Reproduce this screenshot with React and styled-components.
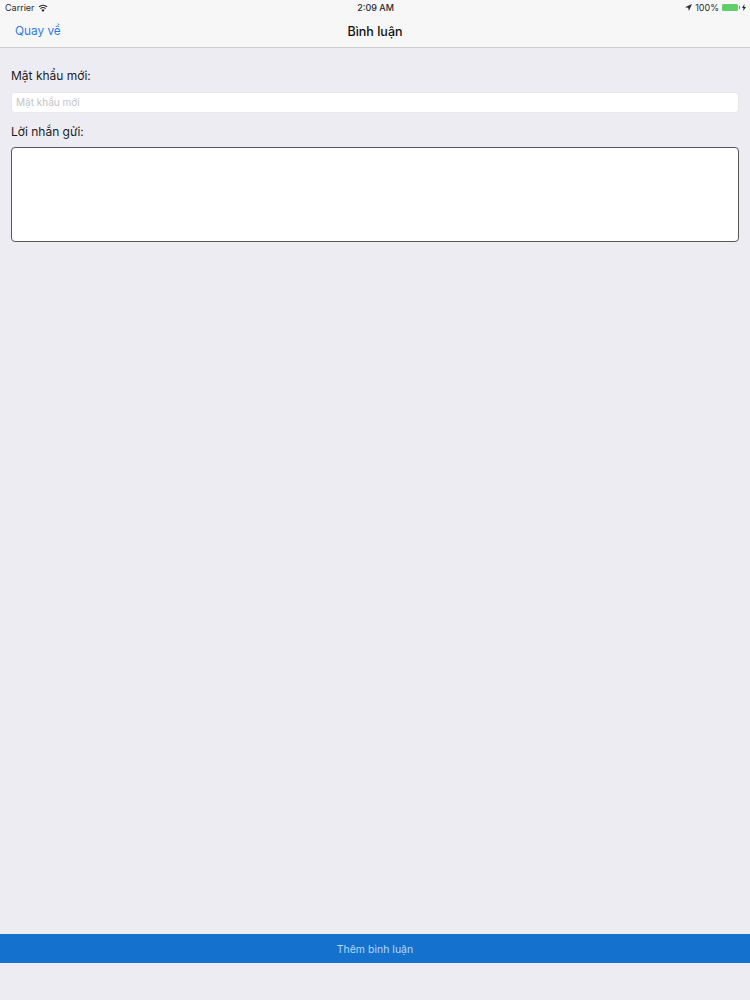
import React from 'react';
import styled, { createGlobalStyle } from 'styled-components';

const GlobalStyle = createGlobalStyle`
  html, body {
    margin: 0;
    padding: 0;
    background: #edecf2;
    font-family: Inter, "Liberation Sans", sans-serif;
  }
  * { box-sizing: border-box; }
`;

const Page = styled.div`
  width: 750px;
  height: 1000px;
  display: flex;
  flex-direction: column;
  background: #edecf2;
  overflow: hidden;
`;

const Header = styled.header`
  height: 48px;
  flex: none;
  background: #f7f7f8;
  border-bottom: 1px solid #cfcfd3;
  display: flex;
  flex-direction: column;
`;

const StatusBar = styled.div`
  height: 15px;
  padding: 0 4px 0 5px;
  display: grid;
  grid-template-columns: 1fr auto 1fr;
  align-items: center;
  font-size: 9px;
  color: #2b2b2d;
`;

const StatusLeft = styled.div`
  display: flex;
  align-items: center;
  gap: 3px;
`;

const StatusRight = styled.div`
  display: flex;
  align-items: center;
  justify-content: flex-end;
  gap: 3px;
`;

const Clock = styled.div`
  font-weight: 500;
`;

const Battery = styled.span`
  width: 16px;
  height: 7px;
  border-radius: 1.5px;
  background: #5fd068;
  position: relative;
  margin-right: 1px;

  &::after {
    content: '';
    position: absolute;
    right: -2px;
    top: 2px;
    width: 1.5px;
    height: 3px;
    background: #8a8a8a;
  }
`;

const NavBar = styled.nav`
  flex: 1;
  display: grid;
  grid-template-columns: 1fr auto 1fr;
  align-items: center;
  padding: 0 15px;
`;

const BackLink = styled.a`
  font-size: 11.8px;
  color: #2f7ae5;
`;

const Title = styled.h1`
  margin: 0;
  font-size: 12.5px;
  font-weight: 500;
  color: #111;
`;

const Form = styled.main`
  flex: 1;
  padding: 19px 11px 0;
  display: flex;
  flex-direction: column;
`;

const Label = styled.label`
  font-size: 12px;
  line-height: 17px;
  color: #1c1c1e;
`;

const TextInput = styled.input`
  height: 21px;
  margin: 8px 0 10px;
  padding: 0 4px 1px;
  border: 1px solid #e8e8ec;
  border-radius: 4px;
  background: #fff;
  font: 10px Inter, "Liberation Sans", sans-serif;

  &::placeholder { color: #c4c4c8; opacity: 1; }
`;

const MessageBox = styled.textarea`
  height: 95px;
  margin-top: 7px;
  border: 1px solid #55565a;
  border-radius: 4px;
  background: #fff;
  resize: none;
  outline: none;
`;

const SubmitButton = styled.button`
  flex: none;
  height: 29px;
  margin-bottom: 37px;
  padding: 1px 0 0;
  border: 0;
  background: #1472ce;
  color: #b4d8f8;
  font: 10.5px Inter, "Liberation Sans", sans-serif;
`;

const WifiIcon = () => (
  <svg width="10" height="8" viewBox="0 0 10 8" fill="#2b2b2d">
    <path d="M5 8 3.4 6a2.5 2.5 0 0 1 3.2 0z" />
    <path d="M2.7 5.1 2 4.2a4.7 4.7 0 0 1 6 0l-.7.9a3.5 3.5 0 0 0-4.6 0z" />
    <path d="M1.3 3.3.5 2.4a7 7 0 0 1 9 0l-.8.9a5.8 5.8 0 0 0-7.4 0z" />
  </svg>
);

const LocationIcon = () => (
  <svg width="7" height="7" viewBox="0 0 8 8" fill="#2b2b2d">
    <path d="M8 0 0 3.6l3.7.7.7 3.7z" />
  </svg>
);

const BoltIcon = () => (
  <svg width="4" height="7" viewBox="0 0 4 7" fill="#2b2b2d">
    <path d="M2.4 0 0 3.9h1.5L1.2 7 4 2.9H2.3z" />
  </svg>
);

const App = () => (
  <>
    <GlobalStyle />
    <Page>
      <Header>
        <StatusBar>
          <StatusLeft>Carrier <WifiIcon /></StatusLeft>
          <Clock>2:09 AM</Clock>
          <StatusRight>
            <LocationIcon />
            <span>100%</span>
            <Battery />
            <BoltIcon />
          </StatusRight>
        </StatusBar>
        <NavBar>
          <BackLink>Quay về</BackLink>
          <Title>Bình luận</Title>
        </NavBar>
      </Header>
      <Form>
        <Label>Mật khẩu mới:</Label>
        <TextInput placeholder="Mật khẩu mới" />
        <Label>Lời nhắn gửi:</Label>
        <MessageBox />
      </Form>
      <SubmitButton>Thêm bình luận</SubmitButton>
    </Page>
  </>
);

export default App;
